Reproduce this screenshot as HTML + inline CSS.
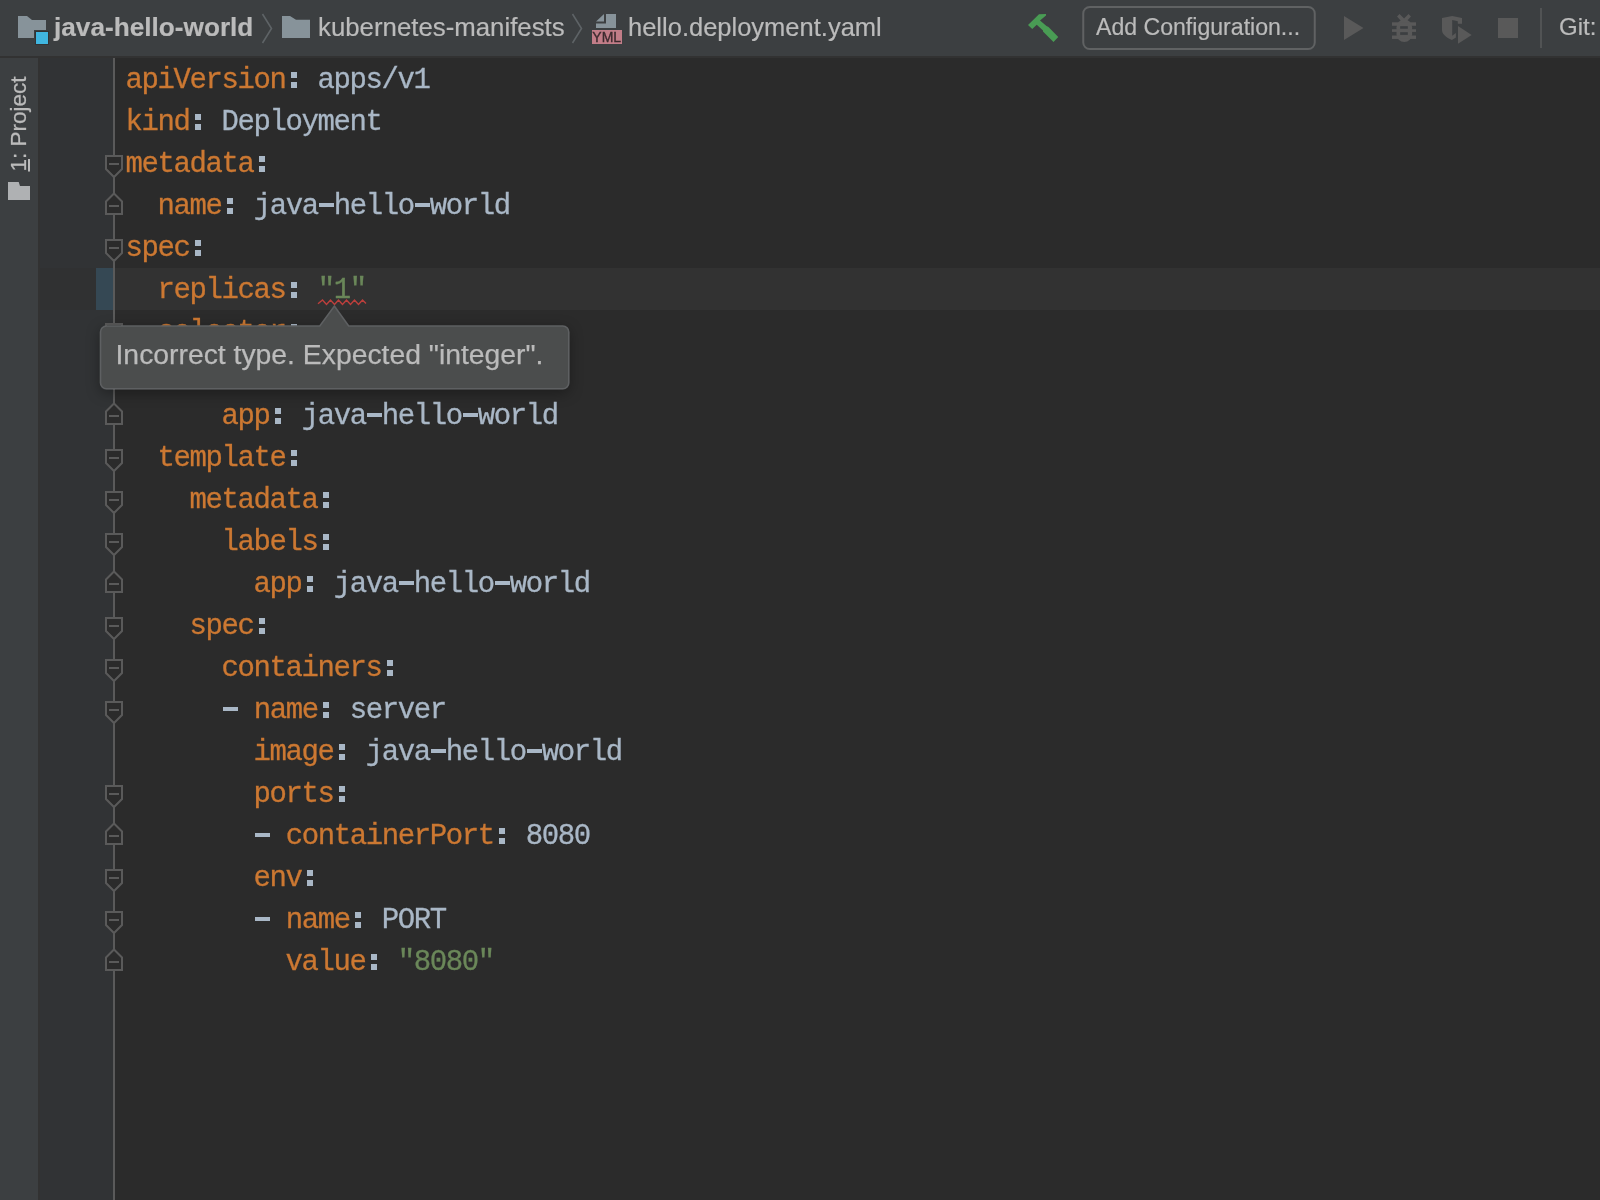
<!DOCTYPE html>
<html><head><meta charset="utf-8">
<style>
html,body{margin:0;padding:0;width:1600px;height:1200px;overflow:hidden;background:#2B2B2B;}
body{position:relative;font-family:"Liberation Sans",sans-serif;}
.abs{position:absolute;}
#toolbar{left:0;top:0;width:1600px;height:56px;background:#3C3F41;}
#tbline{left:0;top:56px;width:1600px;height:2px;background:#323232;}
#strip{left:0;top:58px;width:38px;height:1142px;background:#3C3F41;}
#stripb{left:38px;top:58px;width:2px;height:1142px;background:#323232;}
#gutter{left:40px;top:58px;width:73px;height:1142px;background:#313335;}
#foldline{left:113px;top:58px;width:2px;height:1142px;background:#5A5A5A;}
.nav{position:absolute;top:-0.6px;height:56px;line-height:56px;color:#BBBBBB;font-size:25.5px;white-space:pre;-webkit-text-stroke:0.2px #BBBBBB;}
#code{left:125.6px;top:60px;font-family:"Liberation Mono",monospace;font-size:29px;letter-spacing:-1.4028px;line-height:42px;white-space:pre;color:#A9B7C6;}
.c,.d{display:inline-block;width:16px;height:0;position:relative;}
.c::before,.c::after{content:'';position:absolute;left:5.5px;width:5.6px;background:#A9B7C6;}
.c::before{bottom:10.2px;height:6px;}
.c::after{bottom:0;height:5.8px;}
.d::before{content:'';position:absolute;left:1.4px;width:15.25px;bottom:7.2px;height:3.6px;background:#A9B7C6;}
#code{-webkit-text-stroke-width:0.3px;}
.k{color:#CC7832;}
.s{color:#6A8759;}
</style></head><body style="will-change:transform">
<div id="toolbar" class="abs"></div>
<div id="tbline" class="abs"></div>
<!-- nav bar -->
<svg class="abs" style="left:0;top:0" width="1600" height="56">
  <!-- project folder icon -->
  <path d="M18 16 H27 L32 20 H46 V30 H34 V38 H18 Z" fill="#87939A"/>
  <rect x="35" y="31" width="14" height="14" fill="#2B2B2B" opacity="0.6"/>
  <rect x="36" y="32" width="12" height="12" fill="#40B6E0"/>
  <!-- chevron 1 -->
  <path d="M262.5 14 L271.5 28.5 L262.5 43" fill="none" stroke="#5E6366" stroke-width="1.6"/>
  <!-- folder 2 -->
  <path d="M282 16 H290 L296 19.75 H310 V38 H282 Z" fill="#87939A"/>
  <!-- chevron 2 -->
  <path d="M572.5 14 L581.5 28.5 L572.5 43" fill="none" stroke="#5E6366" stroke-width="1.6"/>
  <!-- yml file icon -->
  <path d="M596 21.5 L604 14 V21.5 Z" fill="#87939A"/>
  <path d="M606 14 H616 V28 H596 V23.5 H606 Z" fill="#87939A"/>
  <rect x="592" y="30" width="30" height="14" fill="#C27D88"/>
  <!-- hammer -->
  <path d="M1028 25 L1039 14.25 L1046 14 L1046 15.5 L1040 20.5 L1046.5 26 L1048.5 27 L1058.25 37 L1053.5 42 L1043 31.5 L1043 30.5 L1036.75 24.75 L1032.25 29 Z" fill="#499C54"/>
  <!-- button -->
  <rect x="1083.25" y="7" width="231.5" height="42" rx="6.5" ry="6.5" fill="none" stroke="#606263" stroke-width="2"/>
  <!-- play -->
  <path d="M1344 16 L1363.5 28 L1344 40 Z" fill="#595959"/>
  <!-- bug -->
  <g fill="#595959">
    <path d="M1397 16.45 L1399.55 13.9 L1404.05 18.4 L1408.55 13.9 L1410.95 16.45 L1406.5 21.5 L1401.5 21.5 Z"/>
    <rect x="1396.5" y="19.5" width="15.6" height="22.5" rx="7.8" ry="7.8"/>
    <rect x="1392" y="22.3" width="24" height="3.45"/>
    <rect x="1392" y="29.2" width="24" height="2.7"/>
    <rect x="1392" y="35.5" width="24" height="3.45"/>
  </g>
  <g fill="#3C3F41">
    <rect x="1400.15" y="26.2" width="7.65" height="2.55"/>
    <rect x="1400.15" y="32.2" width="7.65" height="2.7"/>
  </g>
  <!-- coverage -->
  <g fill="#595959">
    <path d="M1442 18 L1452.2 16 L1462 18 V23.8 H1457.8 V21.3 L1452.2 20.1 V35.8 L1455.9 33.1 V37.6 L1451.9 40 C1446 37.5 1442 34 1442 30 Z"/>
    <path d="M1458 26 L1471.7 35 L1458 43.7 Z"/>
  </g>
  <!-- stop -->
  <rect x="1498" y="18" width="20" height="20" fill="#595959"/>
  <!-- separator -->
  <rect x="1540" y="8" width="2" height="40" fill="#515354"/>
</svg>
<div class="nav" style="left:54px;font-weight:bold;font-size:26.2px;">java-hello-world</div>
<div class="nav" style="left:318px;font-size:25.8px;">kubernetes-manifests</div>
<div class="nav" style="left:628px;">hello.deployment.yaml</div>
<div class="abs" style="left:591.75px;top:29.75px;width:30px;height:14px;line-height:14px;font-size:14px;-webkit-text-stroke:0.35px #3C2A2E;color:#3C2A2E;text-align:center;font-family:'Liberation Sans',sans-serif;">YML</div>
<div class="nav" style="left:1096px;font-size:23.1px;">Add Configuration...</div>
<div class="nav" style="left:1559px;font-size:24px;">Git:</div>

<div id="strip" class="abs"></div>
<div id="stripb" class="abs"></div>
<div id="gutter" class="abs"></div>
<div class="abs" style="left:115px;top:268px;width:1485px;height:42px;background:#323232;"></div>
<div class="abs" style="left:40px;top:268px;width:56px;height:42px;background:#303132;"></div>
<div class="abs" style="left:96px;top:268px;width:17px;height:42px;background:#354854;"></div>
<div id="foldline" class="abs"></div>

<svg class="abs" style="left:0;top:0" width="140" height="1200"><path d="M106 156 H122 V169 L114 177 L106 169 Z" fill="#2B2B2B" stroke="#5A5A5A" stroke-width="2"/><rect x="109" y="163" width="10" height="2" fill="#5A5A5A"/><path d="M106 240 H122 V253 L114 261 L106 253 Z" fill="#2B2B2B" stroke="#5A5A5A" stroke-width="2"/><rect x="109" y="247" width="10" height="2" fill="#5A5A5A"/><path d="M106 324 H122 V337 L114 345 L106 337 Z" fill="#2B2B2B" stroke="#5A5A5A" stroke-width="2"/><rect x="109" y="331" width="10" height="2" fill="#5A5A5A"/><path d="M106 366 H122 V379 L114 387 L106 379 Z" fill="#2B2B2B" stroke="#5A5A5A" stroke-width="2"/><rect x="109" y="373" width="10" height="2" fill="#5A5A5A"/><path d="M106 450 H122 V463 L114 471 L106 463 Z" fill="#2B2B2B" stroke="#5A5A5A" stroke-width="2"/><rect x="109" y="457" width="10" height="2" fill="#5A5A5A"/><path d="M106 492 H122 V505 L114 513 L106 505 Z" fill="#2B2B2B" stroke="#5A5A5A" stroke-width="2"/><rect x="109" y="499" width="10" height="2" fill="#5A5A5A"/><path d="M106 534 H122 V547 L114 555 L106 547 Z" fill="#2B2B2B" stroke="#5A5A5A" stroke-width="2"/><rect x="109" y="541" width="10" height="2" fill="#5A5A5A"/><path d="M106 618 H122 V631 L114 639 L106 631 Z" fill="#2B2B2B" stroke="#5A5A5A" stroke-width="2"/><rect x="109" y="625" width="10" height="2" fill="#5A5A5A"/><path d="M106 660 H122 V673 L114 681 L106 673 Z" fill="#2B2B2B" stroke="#5A5A5A" stroke-width="2"/><rect x="109" y="667" width="10" height="2" fill="#5A5A5A"/><path d="M106 702 H122 V715 L114 723 L106 715 Z" fill="#2B2B2B" stroke="#5A5A5A" stroke-width="2"/><rect x="109" y="709" width="10" height="2" fill="#5A5A5A"/><path d="M106 786 H122 V799 L114 807 L106 799 Z" fill="#2B2B2B" stroke="#5A5A5A" stroke-width="2"/><rect x="109" y="793" width="10" height="2" fill="#5A5A5A"/><path d="M106 870 H122 V883 L114 891 L106 883 Z" fill="#2B2B2B" stroke="#5A5A5A" stroke-width="2"/><rect x="109" y="877" width="10" height="2" fill="#5A5A5A"/><path d="M106 912 H122 V925 L114 933 L106 925 Z" fill="#2B2B2B" stroke="#5A5A5A" stroke-width="2"/><rect x="109" y="919" width="10" height="2" fill="#5A5A5A"/><path d="M114 193.5 L122 201.5 V214 H106 V201.5 Z" fill="#2B2B2B" stroke="#5A5A5A" stroke-width="2"/><rect x="109" y="205" width="10" height="2" fill="#5A5A5A"/><path d="M114 403.5 L122 411.5 V424 H106 V411.5 Z" fill="#2B2B2B" stroke="#5A5A5A" stroke-width="2"/><rect x="109" y="415" width="10" height="2" fill="#5A5A5A"/><path d="M114 571.5 L122 579.5 V592 H106 V579.5 Z" fill="#2B2B2B" stroke="#5A5A5A" stroke-width="2"/><rect x="109" y="583" width="10" height="2" fill="#5A5A5A"/><path d="M114 823.5 L122 831.5 V844 H106 V831.5 Z" fill="#2B2B2B" stroke="#5A5A5A" stroke-width="2"/><rect x="109" y="835" width="10" height="2" fill="#5A5A5A"/><path d="M114 949.5 L122 957.5 V970 H106 V957.5 Z" fill="#2B2B2B" stroke="#5A5A5A" stroke-width="2"/><rect x="109" y="961" width="10" height="2" fill="#5A5A5A"/></svg>
<div class="abs" style="left:-34px;top:108.5px;width:106px;height:30px;line-height:30px;transform:rotate(-90deg);font-size:22.5px;color:#BBBBBB;-webkit-text-stroke:0.25px #BBBBBB;text-align:center;white-space:pre;"><span style="text-decoration:underline;text-underline-offset:2px;">1</span>: Project</div>
<svg class="abs" style="left:0;top:170px" width="38" height="40"><path d="M8 12 L18.7 12 L20 16 L30 16 L30 30 L8 30 Z" fill="#AFB1B3"/></svg>
<div id="code" class="abs"><span class="k">apiVersion</span><span class="c"></span> apps/v1
<span class="k">kind</span><span class="c"></span> Deployment
<span class="k">metadata</span><span class="c"></span>
  <span class="k">name</span><span class="c"></span> java<span class="d"></span>hello<span class="d"></span>world
<span class="k">spec</span><span class="c"></span>
  <span class="k">replicas</span><span class="c"></span> <span class="s">&quot;1&quot;</span>
  <span class="k">selector</span><span class="c"></span>
    <span class="k">matchLabels</span><span class="c"></span>
      <span class="k">app</span><span class="c"></span> java<span class="d"></span>hello<span class="d"></span>world
  <span class="k">template</span><span class="c"></span>
    <span class="k">metadata</span><span class="c"></span>
      <span class="k">labels</span><span class="c"></span>
        <span class="k">app</span><span class="c"></span> java<span class="d"></span>hello<span class="d"></span>world
    <span class="k">spec</span><span class="c"></span>
      <span class="k">containers</span><span class="c"></span>
      <span class="d"></span> <span class="k">name</span><span class="c"></span> server
        <span class="k">image</span><span class="c"></span> java<span class="d"></span>hello<span class="d"></span>world
        <span class="k">ports</span><span class="c"></span>
        <span class="d"></span> <span class="k">containerPort</span><span class="c"></span> 8080
        <span class="k">env</span><span class="c"></span>
        <span class="d"></span> <span class="k">name</span><span class="c"></span> PORT
          <span class="k">value</span><span class="c"></span> <span class="s">&quot;8080&quot;</span>
</div>

<svg class="abs" style="left:0;top:0" width="400" height="320"><path d="M318 303.8 L322.5 300 L326.5 304.5 L330.5 300 L334.5 304.5 L338.5 300 L342.5 304.5 L346.5 300 L350.5 304.5 L354.5 300 L358.5 304.5 L362.5 300 L366 303.5" fill="none" stroke="#BC3F3C" stroke-width="1.4"/></svg>
<div class="abs" style="left:100px;top:325.5px;width:469px;height:64px;border-radius:6px;box-shadow:0 3px 14px rgba(0,0,0,0.35);"></div>
<svg class="abs" style="left:90px;top:295px" width="500" height="110">
  <path d="M16.5 31 H229.8 L244.4 11 L258.7 31 H472.8 A6 6 0 0 1 478.8 37 V87.8 A6 6 0 0 1 472.8 93.8 H16.5 A6 6 0 0 1 10.5 87.8 V37 A6 6 0 0 1 16.5 31 Z" fill="#4B4D4D" stroke="#5E6062" stroke-width="1.6"/>
</svg>
<div class="abs" style="left:115.5px;top:321.8px;height:64px;line-height:64px;font-size:28.33px;color:#BBBBBB;-webkit-text-stroke:0.25px #BBBBBB;white-space:pre;">Incorrect type. Expected "integer".</div>
</body></html>
